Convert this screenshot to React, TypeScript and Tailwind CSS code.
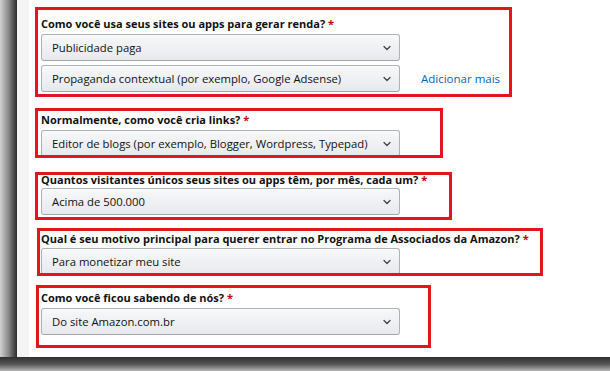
import { ChevronDown } from "lucide-react";

const font = { fontFamily: "'Open Sans', 'Noto Sans', Arial, sans-serif" };

function Select({ value }: { value: string }) {
  return (
    <div className="flex h-[27px] w-[359px] shrink-0 items-center justify-between rounded-[3px] border border-[#adb1b8] border-b-[#a2a6ac] bg-gradient-to-b from-[#f7f8fa] to-[#e7e9ec] pl-[10px] pr-[6px] shadow-[0_1px_0_rgba(255,255,255,0.6)_inset]">
      <span className="text-[11.3px] leading-none text-[#111]">{value}</span>
      <ChevronDown className="h-[12px] w-[12px] text-[#444]" strokeWidth={2.6} />
    </div>
  );
}

function Label({ children }: { children: React.ReactNode }) {
  return (
    <div className="whitespace-nowrap text-[11px] font-bold leading-[16px] text-[#111]">
      {children} <span className="text-[#c40000]">*</span>
    </div>
  );
}

export default function App() {
  return (
    <div className="flex h-[371px] w-[610px] flex-col overflow-hidden bg-[#3a3a3a]" style={font}>
      <div className="flex h-[357px] shrink-0">
        <div className="w-[17px] shrink-0 bg-gradient-to-r from-[#d2d2d2] via-[#8a8a8a] to-[#2c2c2c]" />
        <div className="flex flex-1 bg-white">
          <div className="w-[12px] shrink-0 bg-[#f4f4f4]" />
          <div className="flex flex-1 flex-col pt-[7px]">
            {/* Box 1 */}
            <div className="ml-[6px] h-[90px] w-[477px] overflow-hidden border-[3px] border-[#e3161f] pl-[3px] pt-[6px]">
              <Label>Como você usa seus sites ou apps para gerar renda?</Label>
              <div className="mt-[2px] flex flex-col gap-[4px]">
                <Select value="Publicidade paga" />
                <div className="flex items-center gap-[21px]">
                  <Select value="Propaganda contextual (por exemplo, Google Adsense)" />
                  <span className="text-[11.5px] text-[#0066c0]">Adicionar mais</span>
                </div>
              </div>
            </div>

            {/* Box 2 */}
            <div className="ml-[6px] mt-[11px] h-[50px] w-[408px] overflow-hidden border-[3px] border-[#e3161f] pl-[3px] pt-[1px]">
              <Label>Normalmente, como você cria links?</Label>
              <div className="mt-[2px]">
                <Select value="Editor de blogs (por exemplo, Blogger, Wordpress, Typepad)" />
              </div>
            </div>

            {/* Box 3 */}
            <div className="ml-[6px] mt-[14px] h-[48px] w-[417px] overflow-hidden border-[3px] border-[#e3161f] pl-[3px]">
              <div className="-mt-[3px]">
                <Label>Quantos visitantes únicos seus sites ou apps têm, por mês, cada um?</Label>
              </div>
              <Select value="Acima de 500.000" />
            </div>

            {/* Box 4 */}
            <div className="ml-[8px] mt-[8px] h-[48px] w-[506px] overflow-hidden border-[3px] border-[#e3161f] pl-[1px]">
              <Label>Qual é seu motivo principal para querer entrar no Programa de Associados da Amazon?</Label>
              <div className="mt-[1px]">
                <Select value="Para monetizar meu site" />
              </div>
            </div>

            {/* Box 5 */}
            <div className="ml-[7px] mt-[9px] h-[63px] w-[395px] overflow-hidden border-[3px] border-[#e3161f] pl-[2px] pt-[2px]">
              <Label>Como você ficou sabendo de nós?</Label>
              <div className="mt-[2px]">
                <Select value="Do site Amazon.com.br" />
              </div>
            </div>
          </div>
        </div>
      </div>
      <div className="flex-1 bg-gradient-to-b from-[#2f2f2f] via-[#555] to-[#b5b5b5]" />
    </div>
  );
}
